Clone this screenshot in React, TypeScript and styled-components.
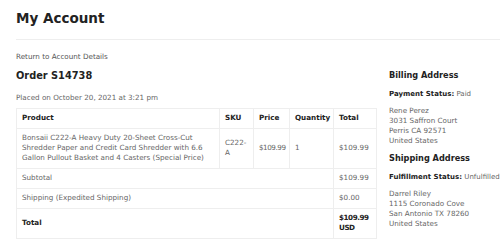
import React from "react";
import styled, { createGlobalStyle } from "styled-components";

const Global = createGlobalStyle`
  body {
    margin: 0;
    background: #fff;
    font-family: "DejaVu Sans", "Open Sans", sans-serif;
    color: #666;
  }
`;

const Page = styled.div`
  padding: 0 0 0 16px;
`;

const Title = styled.h1`
  margin: 0;
  padding-top: 10px;
  height: 29px;
  font-size: 13.5px;
  line-height: 16px;
  font-weight: 700;
  color: #222;
  border-bottom: 1px solid #eee;
`;

const Layout = styled.div`
  display: grid;
  grid-template-columns: 360px 1fr;
  column-gap: 13px;
`;

const Main = styled.div`
  padding-top: 12px;
`;

const BackLink = styled.a`
  display: block;
  font-size: 7.2px;
  line-height: 10px;
  color: #555;
  text-decoration: none;
`;

const OrderTitle = styled.h2`
  margin: 6px 0 0;
  font-size: 9.8px;
  line-height: 16px;
  color: #222;
`;

const Placed = styled.p`
  margin: 9px 0 5px;
  font-size: 7.2px;
  line-height: 10px;
`;

const Table = styled.table`
  width: 360px;
  border-collapse: collapse;
  table-layout: fixed;
  font-size: 7.2px;
  line-height: 10px;
`;

const Th = styled.th`
  border: 1px solid #eee;
  padding: 4px 5px 5px;
  text-align: left;
  font-weight: 700;
  color: #222;
`;

const Td = styled.td<{ $strong?: boolean; $tight?: boolean }>`
  border: 1px solid #eee;
  padding: 4px 5px 5px;
  vertical-align: middle;
  font-weight: ${(p) => (p.$strong ? 700 : 400)};
  color: ${(p) => (p.$strong ? "#222" : "#666")};
  letter-spacing: ${(p) => (p.$tight ? "-0.45px" : "normal")};
`;

const Side = styled.aside`
  padding-top: 29px;
`;

const SideTitle = styled.h3<{ $gap?: number }>`
  margin: ${(p) => p.$gap ?? 0}px 0 0;
  font-size: 8.2px;
  line-height: 12px;
  color: #222;
`;

const Status = styled.p`
  margin: 8px 0 7px;
  font-size: 7px;
  line-height: 10px;
  white-space: nowrap;

  b {
    color: #222;
  }
`;

const Address = styled.address`
  font-style: normal;
  font-size: 7.2px;
  line-height: 10px;
`;

const cols = [203, 34, 36, 44, 43];

export default function App() {
  return (
    <Page>
      <Global />
      <Title>My Account</Title>
      <Layout>
        <Main>
          <BackLink href="#">Return to Account Details</BackLink>
          <OrderTitle>Order S14738</OrderTitle>
          <Placed>Placed on October 20, 2021 at 3:21 pm</Placed>
          <Table>
            <colgroup>
              {cols.map((w, i) => (
                <col key={i} style={{ width: w }} />
              ))}
            </colgroup>
            <thead>
              <tr>
                <Th>Product</Th>
                <Th>SKU</Th>
                <Th>Price</Th>
                <Th>Quantity</Th>
                <Th>Total</Th>
              </tr>
            </thead>
            <tbody>
              <tr>
                <Td>
                  Bonsaii C222-A Heavy Duty 20-Sheet Cross-Cut Shredder Paper
                  and Credit Card Shredder with 6.6 Gallon Pullout Basket and 4
                  Casters (Special Price)
                </Td>
                <Td>C222-A</Td>
                <Td $tight>$109.99</Td>
                <Td>1</Td>
                <Td>$109.99</Td>
              </tr>
              <tr>
                <Td colSpan={4}>Subtotal</Td>
                <Td>$109.99</Td>
              </tr>
              <tr>
                <Td colSpan={4}>Shipping (Expedited Shipping)</Td>
                <Td>$0.00</Td>
              </tr>
              <tr>
                <Td colSpan={4} $strong>
                  Total
                </Td>
                <Td $strong $tight>
                  $109.99 USD
                </Td>
              </tr>
            </tbody>
          </Table>
        </Main>
        <Side>
          <SideTitle>Billing Address</SideTitle>
          <Status>
            <b>Payment Status:</b> Paid
          </Status>
          <Address>
            Rene Perez
            <br />
            3031 Saffron Court
            <br />
            Perris CA 92571
            <br />
            United States
          </Address>
          <SideTitle $gap={6}>Shipping Address</SideTitle>
          <Status>
            <b>Fulfillment Status:</b> Unfulfilled
          </Status>
          <Address>
            Darrel Riley
            <br />
            1115 Coronado Cove
            <br />
            San Antonio TX 78260
            <br />
            United States
          </Address>
        </Side>
      </Layout>
    </Page>
  );
}
